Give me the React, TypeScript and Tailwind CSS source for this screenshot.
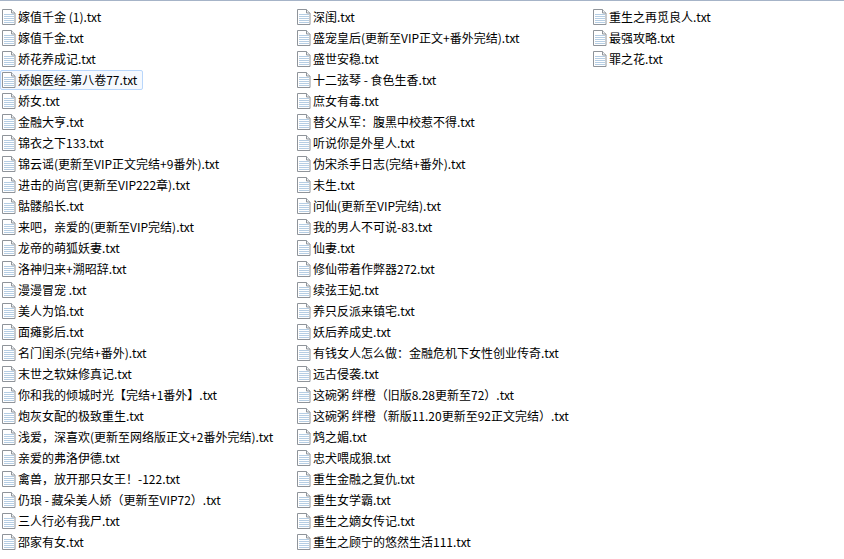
import React from 'react';

const columns: string[][] = [
  [
    '嫁值千金 (1).txt',
    '嫁值千金.txt',
    '娇花养成记.txt',
    '娇娘医经-第八卷77.txt',
    '娇女.txt',
    '金融大亨.txt',
    '锦衣之下133.txt',
    '锦云谣(更新至VIP正文完结+9番外).txt',
    '进击的尚宫(更新至VIP222章).txt',
    '骷髅船长.txt',
    '来吧，亲爱的(更新至VIP完结).txt',
    '龙帝的萌狐妖妻.txt',
    '洛神归来+溯昭辞.txt',
    '漫漫冒宠 .txt',
    '美人为馅.txt',
    '面瘫影后.txt',
    '名门闺杀(完结+番外).txt',
    '末世之软妹修真记.txt',
    '你和我的倾城时光【完结+1番外】.txt',
    '炮灰女配的极致重生.txt',
    '浅爱，深喜欢(更新至网络版正文+2番外完结).txt',
    '亲爱的弗洛伊德.txt',
    '禽兽，放开那只女王！-122.txt',
    '仍琅 - 藏朵美人娇（更新至VIP72）.txt',
    '三人行必有我尸.txt',
    '邵家有女.txt',
  ],
  [
    '深闺.txt',
    '盛宠皇后(更新至VIP正文+番外完结).txt',
    '盛世安稳.txt',
    '十二弦琴 - 食色生香.txt',
    '庶女有毒.txt',
    '替父从军：腹黑中校惹不得.txt',
    '听说你是外星人.txt',
    '伪宋杀手日志(完结+番外).txt',
    '未生.txt',
    '问仙(更新至VIP完结).txt',
    '我的男人不可说-83.txt',
    '仙妻.txt',
    '修仙带着作弊器272.txt',
    '续弦王妃.txt',
    '养只反派来镇宅.txt',
    '妖后养成史.txt',
    '有钱女人怎么做：金融危机下女性创业传奇.txt',
    '远古侵袭.txt',
    '这碗粥 绊橙（旧版8.28更新至72）.txt',
    '这碗粥 绊橙（新版11.20更新至92正文完结）.txt',
    '鸩之媚.txt',
    '忠犬喂成狼.txt',
    '重生金融之复仇.txt',
    '重生女学霸.txt',
    '重生之嫡女传记.txt',
    '重生之顾宁的悠然生活111.txt',
  ],
  ['重生之再觅良人.txt', '最强攻略.txt', '罪之花.txt'],
];

const TxtIcon = () => (
  <svg width="16" height="16" viewBox="0 0 16 16" className="shrink-0">
    <path d="M0.5 0.5h9l3.5 3.5v11.5h-12.5z" fill="#ffffff" stroke="#8f949a" />
    <path d="M9.5 0.5v3.5h3.5" fill="#eef0f2" stroke="#8f949a" />
    <rect x="2" y="5" width="10" height="1" fill="#b5cde3" />
    <rect x="2" y="7" width="10" height="1" fill="#b5cde3" />
    <rect x="2" y="9" width="10" height="1" fill="#b5cde3" />
    <rect x="2" y="11" width="10" height="1" fill="#b5cde3" />
    <rect x="2" y="13" width="10" height="1" fill="#b5cde3" />
  </svg>
);

const FileItem: React.FC<{ name: string; hovered?: boolean }> = ({ name, hovered }) => (
  <div
    className={`flex h-5 w-fit items-center rounded-[2px] border pl-[1px] pr-[5px] ${
      hovered ? 'border-[#b8d6fb] bg-[#f5f9fe]' : 'border-transparent'
    }`}
  >
    <TxtIcon />
    <span className="whitespace-nowrap text-[12px] leading-5 text-black">{name}</span>
  </div>
);

export default function App() {
  return (
    <div
      className="h-[559px] w-[844px] overflow-hidden border-t border-[#a6b4c8] bg-white pt-[6px]"
      style={{ fontFamily: '"Microsoft YaHei", "Noto Sans CJK SC", "Noto Sans", sans-serif' }}
    >
      <div className="flex">
        {columns.map((col, ci) => (
          <div
            key={ci}
            className={`flex flex-col gap-[1px] ${ci === 0 ? 'w-[295px]' : ci === 1 ? 'w-[296px]' : 'flex-1'}`}
          >
            {col.map((name) => (
              <FileItem key={name} name={name} hovered={name === '娇娘医经-第八卷77.txt'} />
            ))}
          </div>
        ))}
      </div>
    </div>
  );
}
